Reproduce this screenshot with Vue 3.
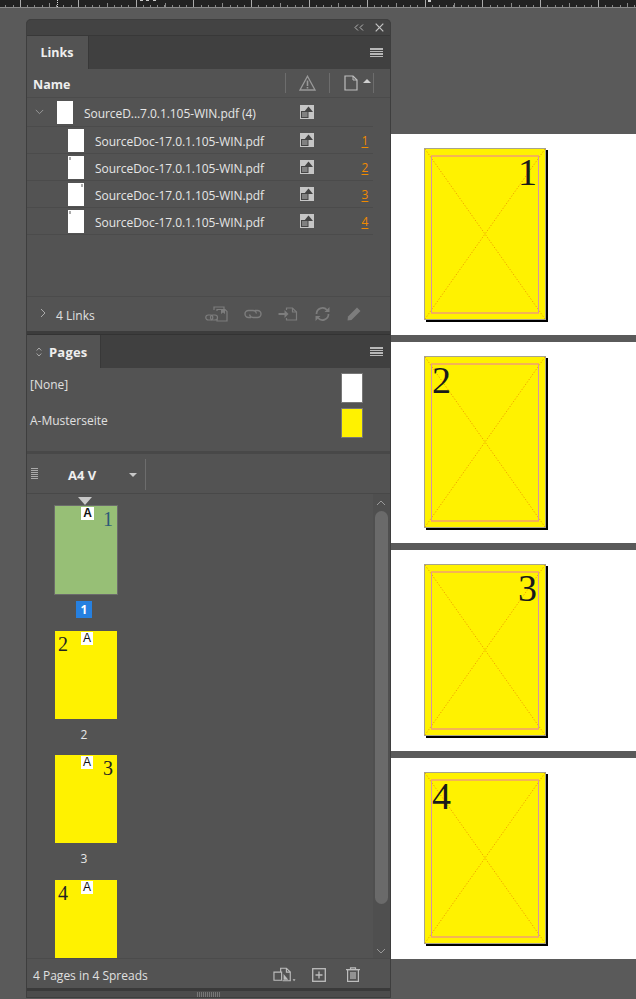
<script setup>
const links = [
  { n: '1', mark: '' },
  { n: '2', mark: 'left' },
  { n: '3', mark: 'right' },
  { n: '4', mark: 'left' }
]
const thumbs = [
  { n: '1', side: 'right', active: true, label: true },
  { n: '2', side: 'left', label: true },
  { n: '3', side: 'right', label: true },
  { n: '4', side: 'left', label: false }
]
const sheets = [
  { n: '1', side: 'right' },
  { n: '2', side: 'left' },
  { n: '3', side: 'right' },
  { n: '4', side: 'left' }
]
</script>

<template>
  <div class="screen">
    <div class="ruler">
      <i class="tick-mark m1"></i>
      <i class="tick-blob b1"></i>
      <i class="tick-blob b2"></i>
      <i class="tick-blob b3"></i>
      <i class="tick-blob b4"></i>
    </div>
    <div class="work">
      <div class="panel">
        <div class="titlebar">
          <svg width="10" height="7" viewBox="0 0 10 7" class="collapse"><path d="M4 .5 1 3.5l3 3M9 .5l-3 3 3 3" fill="none" stroke="#b4b4b4" stroke-width="1"/></svg>
          <svg width="9" height="9" viewBox="0 0 9 9"><path d="M.7.7l7.6 7.6M8.3.7.7 8.3" fill="none" stroke="#c4c4c4" stroke-width="1.2"/></svg>
        </div>

        <div class="tabbar">
          <div class="tab links-tab">Links</div>
          <div class="menu"><i></i><i></i><i></i><i></i></div>
        </div>

        <div class="links">
          <div class="colhead">
            <span class="name-col">Name</span>
            <span class="sep sep1"></span>
            <svg class="warn" width="17" height="16" viewBox="0 0 17 16"><path d="M8.5 1.2 16 15H1z" fill="none" stroke="#999" stroke-width="1.3"/><path d="M8.5 5.5v5.5M8.5 12v1.6" stroke="#999" stroke-width="1.6"/></svg>
            <span class="sep sep2"></span>
            <svg class="docicon" width="14" height="16" viewBox="0 0 14 16"><path d="M1 1h8l4 4v10H1z" fill="none" stroke="#bdbdbd" stroke-width="1.2"/><path d="M9 1v4h4" fill="none" stroke="#bdbdbd"/></svg>
            <span class="sort"></span>
            <span class="sep sep3"></span>
          </div>

          <div class="group row">
            <svg class="chev" width="9" height="6" viewBox="0 0 11 7"><path d="M1 1l4.500 4.500L10 1" fill="none" stroke="#999" stroke-width="1.200"/></svg>
            <span class="doc"></span>
            <span class="fname group-name">SourceD...7.0.1.105-WIN.pdf (4)</span>
            <svg class="status" width="14" height="14" viewBox="0 0 14 14"><rect width="14" height="14" fill="#c6c6c6"/><path d="M8.500 1.500 13 7H4z" fill="#454545"/><rect x="1.500" y="6.500" width="6.500" height="6" fill="#808080" stroke="#454545"/></svg>
          </div>

          <div v-for="l in links" :key="l.n" class="row child">
            <span class="doc" :class="l.mark && 'mark-' + l.mark"></span>
            <span class="fname">SourceDoc-17.0.1.105-WIN.pdf</span>
            <svg class="status" width="14" height="14" viewBox="0 0 14 14"><rect width="14" height="14" fill="#c6c6c6"/><path d="M8.500 1.500 13 7H4z" fill="#454545"/><rect x="1.500" y="6.500" width="6.500" height="6" fill="#808080" stroke="#454545"/></svg>
            <span class="pagelink">{{ l.n }}</span>
          </div>

          <div class="links-foot">
            <svg width="6" height="10" viewBox="0 0 6 10" class="foot-chev"><path d="M1 1l4 4-4 4" fill="none" stroke="#aaa" stroke-width="1"/></svg>
            <span class="count">4 Links</span>
            <div class="foot-icons">
              <svg width="23" height="16" viewBox="0 0 23 16"><g fill="none" stroke="#7d7d7d" stroke-width="1.200"><path d="M9 4V1h10v2M12 5V3.500h6"/><path d="M12 3.500h8l2 2V15H12v-2"/><rect x=".8" y="9" width="7" height="5" rx="2.500"/><rect x="5.500" y="9" width="7" height="5" rx="2.500"/></g><path d="M16 3h4v5l-2-1.500L16 8z" fill="#7d7d7d"/></svg>
              <svg width="18" height="10" viewBox="0 0 18 10"><g fill="none" stroke="#7d7d7d" stroke-width="1.400"><path d="M7 8.500H4.500a3.500 3.500 0 0 1 0-7H9a3.500 3.500 0 0 1 3.400 3"/><path d="M11 1.500h2.500a3.500 3.500 0 0 1 0 7H9a3.500 3.500 0 0 1-3.400-3"/></g></svg>
              <svg width="20" height="14" viewBox="0 0 19 14"><g fill="none" stroke="#7d7d7d" stroke-width="1.200"><path d="M8 3V1h6l4 4v8H8v-2"/><path d="M14 1v4h4"/></g><path d="M0 6h6V3l4 4-4 4V8H0z" fill="#7d7d7d"/></svg>
              <svg width="17" height="16" viewBox="0 0 16 16"><g fill="none" stroke="#7d7d7d" stroke-width="1.700"><path d="M2 8a6 6 0 0 1 10.500-4"/><path d="M14 8a6 6 0 0 1-10.500 4"/></g><path d="M15 1v5h-5zM1 15v-5h5z" fill="#7d7d7d"/></svg>
              <svg width="14" height="14" viewBox="0 0 14 14"><path d="M10 .5 13.500 4 4.500 13 .5 13.500 1 9.500z" fill="#7d7d7d"/></svg>
            </div>
          </div>
        </div>

        <div class="panel-gap"></div>

        <div class="tabbar pages-bar">
          <div class="tab pages-tab">
            <svg width="6" height="10" viewBox="0 0 6 10"><path d="M.7 3.500 3 1l2.300 2.500M.7 6.500 3 9l2.300-2.500" fill="none" stroke="#aaa"/></svg>
            <span>Pages</span>
          </div>
          <div class="menu"><i></i><i></i><i></i><i></i></div>
        </div>

        <div class="masters">
          <div class="master none-row">
            <span>[None]</span>
            <span class="swatch white"></span>
          </div>
          <div class="master musters">
            <span>A-Musterseite</span>
            <span class="swatch yellow"></span>
          </div>
        </div>

        <div class="size-bar">
          <div class="grip"><i v-for="k in 6" :key="k"></i></div>
          <span class="size">A4 V</span>
          <span class="drop"></span>
          <span class="size-sep"></span>
        </div>

        <div class="thumbs">
          <div class="thumb-list">
            <div v-for="t in thumbs" :key="t.n" class="thumb-item">
              <div class="thumb" :class="{ active: t.active }">
                <span v-if="t.active" class="marker"></span>
                <span class="badge">A</span>
                <span class="thumb-num" :class="t.side">{{ t.n }}</span>
              </div>
              <div v-if="t.label" class="thumb-label" :class="{ on: t.active }">{{ t.n }}</div>
            </div>
          </div>
          <div class="scroll">
            <svg width="10" height="6" viewBox="0 0 10 6" class="arrow-up"><path d="M1 5l4-4 4 4" fill="none" stroke="#999"/></svg>
            <div class="scroll-thumb"></div>
            <svg width="10" height="6" viewBox="0 0 10 6" class="arrow-down"><path d="M1 1l4 4 4-4" fill="none" stroke="#999"/></svg>
          </div>
        </div>

        <div class="pages-foot">
          <span class="count2">4 Pages in 4 Spreads</span>
          <div class="foot-icons2">
            <svg width="23" height="15" viewBox="0 0 24 15"><g fill="none" stroke="#bdbdbd" stroke-width="1.200"><path d="M1 5h8v8.500H1z"/><path d="M8 5V1h6l4 4v9h-8"/><path d="M14 1v4h4"/></g><path d="M11 7l5 6h-5z" fill="#bdbdbd"/><path d="M20.500 12.500h3L22 14.500z" fill="#bdbdbd"/></svg>
            <svg width="14" height="14" viewBox="0 0 14 14"><rect x=".7" y=".7" width="12.600" height="12.600" fill="none" stroke="#bdbdbd" stroke-width="1.300"/><path d="M7 3.500v7M3.500 7h7" stroke="#bdbdbd" stroke-width="1.300"/></svg>
            <svg class="trash" width="14" height="15" viewBox="0 0 14 15"><g fill="none" stroke="#bdbdbd" stroke-width="1.200"><path d="M0 2.600h14M4.500 2.500V.8h5v1.700"/><rect x="1.600" y="2.600" width="10.800" height="11.800"/><path d="M5 5v7M7 5v7M9 5v7"/></g></svg>
          </div>
        </div>
        <div class="resize"><div class="resize-grip"></div></div>
      </div>

      <div class="canvas">
        <div v-for="s in sheets" :key="s.n" class="strip">
          <div class="sheet">
            <svg class="sheet-art" width="122" height="172" viewBox="0 0 122 172">
              <rect x="0.500" y="0.500" width="121" height="171" fill="#fff200" stroke="#a8a48a"/>
              <path d="M1 1 121 171M121 1 1 171" stroke="#f0a000" stroke-width="1" stroke-dasharray="1.200 1.800" fill="none"/>
              <path d="M7.500 8v157M114.500 8v157" stroke="#d893a4" stroke-width="1" fill="none"/>
              <path d="M7 8h108M7 165h108" stroke="#f2a070" stroke-width="1.300" fill="none"/>
            </svg>
            <span class="sheet-num" :class="s.side">{{ s.n }}</span>
          </div>
        </div>
      </div>
    </div>
  </div>
</template>

<style>
html, body { margin: 0; background: #5a5a5a; }
</style>

<style scoped>
.screen {
  width: 636px;
  height: 999px;
  overflow: hidden;
  background: #5a5a5a;
  font-family: "Open Sans", "Noto Sans", sans-serif;
  font-size: 12px;
  color: #e4e4e4;
}
.ruler {
  height: 7px;
  position: relative;
  border-bottom: 1px solid #8a8a8a;
  background-color: #222;
  background-image:
    repeating-linear-gradient(90deg, #aaa 0 1px, transparent 1px 57.8px),
    repeating-linear-gradient(90deg, #888 0 1px, transparent 1px 57.8px),
    repeating-linear-gradient(90deg, #888 0 1px, transparent 1px 7.225px);
  background-size: 100% 100%, 100% 4px, 100% 2px;
  background-position: 20px 0, 49px 100%, 20px 100%;
  background-repeat: repeat-x;
}
.tick-mark {
  position: absolute;
  left: 57px;
  top: 0;
  width: 1px;
  height: 7px;
  background: repeating-linear-gradient(#ddd 0 1px, transparent 1px 2px);
}
.tick-blob {
  position: absolute;
  top: 0;
  width: 3px;
  height: 1px;
  background: #ccc;
}
.b1 { left: 140px; }
.b2 { left: 146px; }
.b3 { left: 153px; }
.b4 { left: 428px; height: 2px; }
.work {
  display: flex;
  align-items: flex-start;
  padding: 11px 0 0 26px;
}

.panel {
  width: 365px;
  height: 979px;
  flex: none;
  display: flex;
  flex-direction: column;
  background: #535353;
  border-radius: 5px 5px 0 0;
  overflow: hidden;
  position: relative;
}
.panel::after {
  content: "";
  position: absolute;
  inset: 0;
  border: 1px solid #3e3e3e;
  border-radius: 5px 5px 0 0;
  pointer-events: none;
}
.titlebar {
  height: 16px;
  background: #434343;
  border-bottom: 1px solid #383838;
  display: flex;
  align-items: center;
  justify-content: flex-end;
  gap: 11px;
  padding-right: 7px;
  flex: none;
}
.tabbar {
  height: 33px;
  flex: none;
  display: flex;
  align-items: stretch;
  justify-content: space-between;
  background: #404040;
}
.tab {
  background: #535353;
  font-weight: 700;
  color: #eee;
  font-size: 12.5px;
  display: flex;
  align-items: center;
  border-right: 1px solid #383838;
}
.links-tab { width: 62px; justify-content: center; padding-right: 1px; box-sizing: border-box; margin-left: 1px; }
.pages-tab { width: 75px; gap: 7px; padding-left: 10px; box-sizing: border-box; letter-spacing: .2px; font-size: 13px; }
.menu {
  width: 13px;
  margin-right: 8px;
  display: flex;
  flex-direction: column;
  justify-content: center;
  gap: 1px;
}
.menu i { display: block; height: 1.500px; background: #b8b8b8; }

.links { height: 262px; flex: none; display: flex; flex-direction: column; }
.colhead {
  height: 29px;
  flex: none;
  display: flex;
  align-items: center;
  border-bottom: 1px solid #4b4b4b;
  box-sizing: border-box;
}
.name-col { font-weight: 700; color: #eee; font-size: 12.500px; margin: 2px 0 0 7px; width: 252px; }
.sep { width: 1px; height: 20px; background: #6d6d6d; flex: none; }
.warn { margin-left: 13px; }
.sep2 { margin-left: 13px; }
.docicon { margin-left: 14px; }
.sort {
  width: 0;
  height: 0;
  border-left: 4px solid transparent;
  border-right: 4px solid transparent;
  border-bottom: 4px solid #d0d0d0;
  margin: 0 2px 4px 5px;
}
.row {
  display: flex;
  align-items: center;
  width: 347px;
  box-sizing: border-box;
  border-bottom: 1px solid #4b4b4b;
  flex: none;
}
.group { height: 29px; padding-left: 9px; }
.child { height: 27px; padding-left: 42px; }
.chev { margin-right: 13px; flex: none; }
.doc {
  width: 16px;
  height: 23px;
  background: #fff;
  flex: none;
  position: relative;
}
.mark-left::after, .mark-right::after {
  content: "";
  position: absolute;
  top: 1px;
  width: 2px;
  height: 3px;
  background: #aaa;
}
.mark-left::after { left: 1px; }
.mark-right::after { right: 1px; }
.fname {
  margin-left: 11px;
  flex: none;
  white-space: nowrap;
  color: #e6e6e6;
  font-size: 12px;
  letter-spacing: -0.06px;
  margin-top: 2px;
}
.group-name { width: 216px; }
.child .fname { width: 205px; }
.status { flex: none; }
.pagelink {
  margin-left: 47px;
  color: #f08a00;
  text-decoration: underline;
  text-underline-offset: 2px;
  width: 8px;
  text-align: center;
}
.links-foot {
  margin-top: auto;
  height: 35px;
  border-top: 1px solid #4b4b4b;
  box-sizing: border-box;
  display: flex;
  align-items: center;
  flex: none;
  padding: 0 0 1px 14px;
}
.foot-chev { margin-top: -1px; }
.count { margin-left: 10px; margin-top: 3px; color: #e0e0e0; }
.foot-icons {
  margin-left: auto;
  display: flex;
  align-items: center;
  gap: 16px;
  padding-right: 30px;
}
.panel-gap { height: 4px; background: #3c3c3c; flex: none; border-bottom: 1px solid #333; box-sizing: border-box; }

.masters {
  height: 86px;
  flex: none;
  box-sizing: border-box;
  border-bottom: 3px solid #484848;
  padding: 5px 28px 0 4px;
  display: flex;
  flex-direction: column;
  gap: 7px;
}
.master { display: flex; justify-content: space-between; align-items: flex-start; color: #e0e0e0; height: 28px; }
.none-row span:first-child { margin-top: 3px; }
.musters span:first-child { margin-top: 4px; }
.swatch { width: 20px; border: 1px solid #777; flex: none; }
.white { height: 28px; background: #fff; }
.yellow { height: 28px; background: #fff200; }

.size-bar {
  height: 40px;
  flex: none;
  display: flex;
  align-items: center;
  border-bottom: 1px solid #484848;
  box-sizing: border-box;
}
.grip { margin-left: 5px; width: 7px; display: flex; flex-direction: column; gap: 1px; }
.grip i { display: block; height: 1px; background: #aaa; }
.size { font-weight: 700; font-size: 13px; margin: 3px 0 0 30px; width: 61px; color: #eee; }
.drop {
  width: 0;
  height: 0;
  border-left: 4px solid transparent;
  border-right: 4px solid transparent;
  border-top: 4px solid #c8c8c8;
  flex: none;
  margin-top: 2px;
}
.size-sep { width: 1px; height: 31px; margin: 2px 0 0 8px; background: #6d6d6d; }

.thumbs { height: 464px; flex: none; display: flex; justify-content: space-between; overflow: hidden; }
.thumb-list { padding: 12px 0 0 29px; }
.thumb-item { height: 124.700px; }
.thumb {
  width: 62px;
  height: 88px;
  background: #fff200;
  position: relative;
}
.thumb.active { background: #97bf76; outline: 1px solid #6b6b6b; }
.marker {
  position: absolute;
  left: 23px;
  top: -9px;
  border-left: 7.500px solid transparent;
  border-right: 7.500px solid transparent;
  border-top: 8px solid #c8c8c8;
}
.badge {
  position: absolute;
  left: 26px;
  top: 1px;
  width: 12px;
  height: 13px;
  background: #fff;
  color: #111;
  font-size: 12px;
  line-height: 13px;
  text-align: center;
  font-family: "Liberation Sans", sans-serif;
}
.active .badge { font-weight: 700; width: 13px; }
.thumb-num {
  position: absolute;
  top: 1px;
  font-family: "Liberation Serif", serif;
  font-size: 20px;
  line-height: 24px;
  color: #222;
}
.thumb-num.right { right: 4px; }
.thumb-num.left { left: 3px; }
.active .thumb-num { color: #2d5a78; }
.thumb-label {
  width: 16px;
  height: 17px;
  line-height: 17px;
  margin: 7px 0 0 21px;
  text-align: center;
  color: #e8e8e8;
}
.thumb-label.on { background: #2680e0; color: #fff; font-weight: 700; }

.scroll {
  width: 17px;
  flex: none;
  background: #4f4f4f;
  position: relative;
  margin-right: 1px;
}
.arrow-up { position: absolute; left: 3px; top: 6px; }
.arrow-down { position: absolute; left: 3px; bottom: 4px; }
.scroll-thumb {
  position: absolute;
  left: 2px;
  top: 17px;
  width: 13px;
  height: 393px;
  border-radius: 7px;
  background: #6a6a6a;
}
.pages-foot {
  height: 30px;
  flex: none;
  display: flex;
  align-items: center;
  justify-content: space-between;
  border-top: 1px solid #4b4b4b;
  box-sizing: border-box;
  padding: 2px 31px 0 7px;
}
.count2 { color: #e0e0e0; margin-top: 2px; }
.foot-icons2 { display: flex; align-items: center; gap: 16px; }
.trash { margin-left: 4px; }
.resize {
  flex: 1;
  background: #4c4c4c;
  border-top: 3px solid #3a3a3a;
  display: flex;
  justify-content: center;
  align-items: center;
}
.resize-grip {
  width: 24px;
  height: 5px;
  background: repeating-linear-gradient(90deg, #777 0 1px, transparent 1px 2px);
}

.canvas {
  margin-top: 115px;
  flex: 1;
  display: flex;
  flex-direction: column;
  gap: 7px;
}
.strip {
  height: 201px;
  background: #fff;
  padding: 14px 0 0 33px;
  box-sizing: border-box;
}
.sheet {
  width: 122px;
  height: 172px;
  position: relative;
  box-shadow: 2px 2px 0 #000;
}
.sheet-art { display: block; }
.sheet-num {
  position: absolute;
  top: 2px;
  font-family: "Liberation Serif", serif;
  font-size: 38px;
  line-height: 44px;
  color: #1a1a1a;
}
.sheet-num.right { right: 9px; }
.sheet-num.left { left: 8px; }
</style>
